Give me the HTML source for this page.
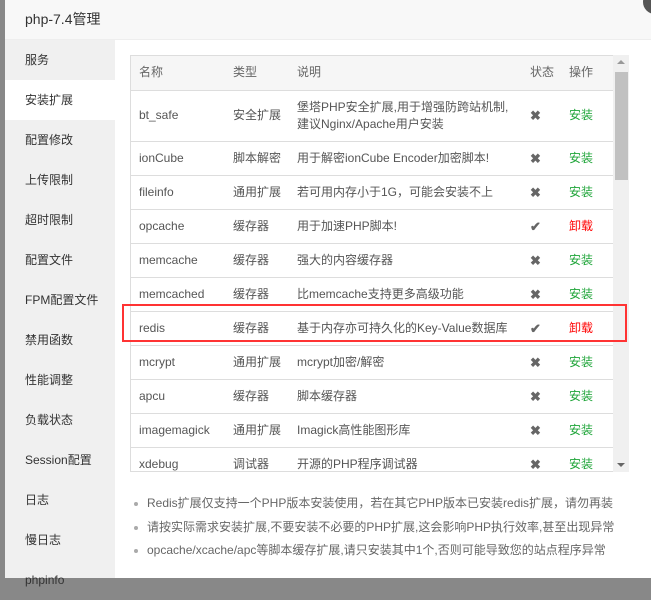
<!DOCTYPE html>
<html><head><meta charset="utf-8"><style>
*{margin:0;padding:0;box-sizing:border-box}
body{width:651px;height:578px;overflow:hidden;background:#888;font-family:"Liberation Sans","Noto Sans CJK SC",sans-serif;font-size:12px;color:#555;position:relative}
.dlg{position:absolute;left:5px;top:0;width:646px;height:578px;background:#fff}
.title{height:40px;background:#f8f8f8;border-bottom:1px solid #eee;font-size:14px;color:#333;line-height:38px;padding-left:20px}
.close{position:absolute;left:638px;top:-10px;width:24px;height:24px;border-radius:50%;background:#555}
.side{position:absolute;left:0;top:40px;width:110px;height:538px;background:#f0f0f0}
.side div{height:40px;line-height:40px;padding-left:20px;color:#333;font-size:12px}
.side .act{background:#fff}
.wrap{position:absolute;left:125px;top:55px;width:499px;height:417px;overflow:hidden;border:1px solid #ddd;border-right:none}
table{border-collapse:collapse;width:482px;table-layout:fixed}
td,th{border-bottom:1px solid #ddd;height:34px;padding-left:8px;text-align:left;font-weight:normal;color:#555;vertical-align:middle;line-height:17px}
th{background:#f6f6f6;height:34px;color:#666}
.x{font-size:13px;color:#666;font-weight:bold}
.g{color:#20a53a}.r{color:#f00}
.sb{position:absolute;left:608px;top:55px;width:16px;height:417px;background:#f0f0f0}
.thumb{position:absolute;left:2px;top:17px;width:13px;height:108px;background:#c1c1c1}
.up{position:absolute;left:4px;top:5px;border:4px solid transparent;border-bottom:4px solid #999;border-top:none;width:0}
.dn{position:absolute;left:4px;bottom:5px;border:4px solid transparent;border-top:4px solid #666;border-bottom:none;width:0}
.red{position:absolute;left:117px;top:304px;width:505px;height:38px;border:2px solid #f33}
ul{position:absolute;left:127px;top:492px;list-style:none;color:#666;font-size:12px}
li{height:23.5px;line-height:22px;padding-left:15px;position:relative}
li:before{content:"";position:absolute;left:2px;top:10px;width:4px;height:4px;border-radius:50%;background:#aaa}
</style></head><body>
<div class="dlg">
<div class="title">php-7.4管理</div>
<div class="close"></div>
<div class="side">
<div>服务</div><div class="act">安装扩展</div><div>配置修改</div><div>上传限制</div><div>超时限制</div><div>配置文件</div><div>FPM配置文件</div><div>禁用函数</div><div>性能调整</div><div>负载状态</div><div>Session配置</div><div>日志</div><div>慢日志</div><div>phpinfo</div>
</div>
<div class="wrap"><table>
<colgroup><col style="width:94px"><col style="width:64px"><col style="width:233px"><col style="width:39px"><col></colgroup>
<tr><th>名称</th><th>类型</th><th>说明</th><th>状态</th><th>操作</th></tr>
<tr><td style="height:51px">bt_safe</td><td>安全扩展</td><td>堡塔PHP安全扩展,用于增强防跨站机制,<br>建议Nginx/Apache用户安装</td><td class="x">✖</td><td class="g">安装</td></tr>
<tr><td>ionCube</td><td>脚本解密</td><td>用于解密ionCube Encoder加密脚本!</td><td class="x">✖</td><td class="g">安装</td></tr>
<tr><td>fileinfo</td><td>通用扩展</td><td>若可用内存小于1G，可能会安装不上</td><td class="x">✖</td><td class="g">安装</td></tr>
<tr><td>opcache</td><td>缓存器</td><td>用于加速PHP脚本!</td><td class="x">✔</td><td class="r">卸载</td></tr>
<tr><td>memcache</td><td>缓存器</td><td>强大的内容缓存器</td><td class="x">✖</td><td class="g">安装</td></tr>
<tr><td>memcached</td><td>缓存器</td><td>比memcache支持更多高级功能</td><td class="x">✖</td><td class="g">安装</td></tr>
<tr><td>redis</td><td>缓存器</td><td>基于内存亦可持久化的Key-Value数据库</td><td class="x">✔</td><td class="r">卸载</td></tr>
<tr><td>mcrypt</td><td>通用扩展</td><td>mcrypt加密/解密</td><td class="x">✖</td><td class="g">安装</td></tr>
<tr><td>apcu</td><td>缓存器</td><td>脚本缓存器</td><td class="x">✖</td><td class="g">安装</td></tr>
<tr><td>imagemagick</td><td>通用扩展</td><td>Imagick高性能图形库</td><td class="x">✖</td><td class="g">安装</td></tr>
<tr><td>xdebug</td><td>调试器</td><td>开源的PHP程序调试器</td><td class="x">✖</td><td class="g">安装</td></tr>
</table></div>
<div class="sb"><div class="up"></div><div class="thumb"></div><div class="dn"></div></div>
<div class="red"></div>
<ul>
<li>Redis扩展仅支持一个PHP版本安装使用，若在其它PHP版本已安装redis扩展，请勿再装</li>
<li>请按实际需求安装扩展,不要安装不必要的PHP扩展,这会影响PHP执行效率,甚至出现异常</li>
<li>opcache/xcache/apc等脚本缓存扩展,请只安装其中1个,否则可能导致您的站点程序异常</li>
</ul>
</div>
</body></html>
